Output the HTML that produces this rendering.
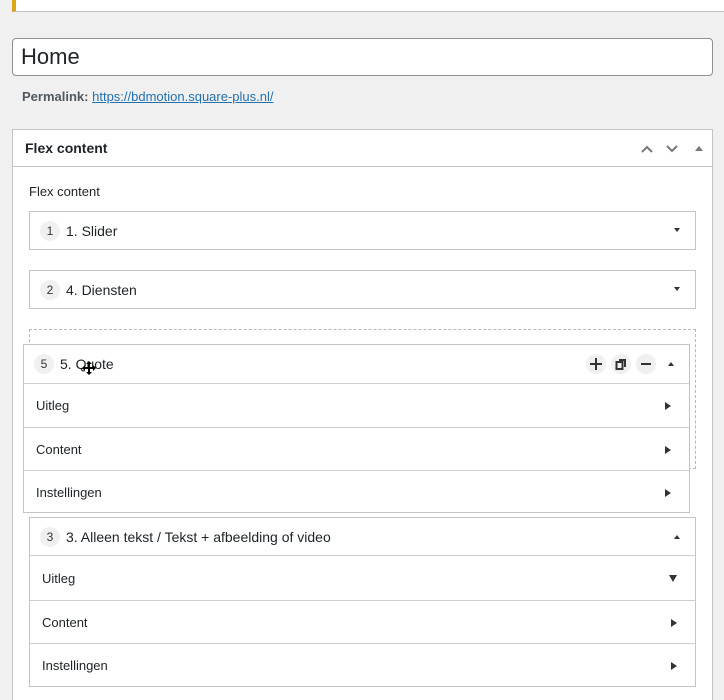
<!DOCTYPE html>
<html><head><meta charset="utf-8"><style>
*{box-sizing:border-box;margin:0;padding:0}
html{overflow:hidden;height:700px}
body{width:724px;height:700px;background:#f0f0f1;font-family:"Liberation Sans",sans-serif;color:#1d2327;position:relative;overflow:hidden}
.a{position:absolute}
.box{position:absolute;background:#fff;border:1px solid #c3c4c7}
.badge{position:absolute;width:20px;height:20px;border-radius:50%;background:#f0f0f1;font-size:12px;line-height:20px;text-align:center;color:#333}
.t{position:absolute;font-size:14px}
.row{position:absolute;left:0;right:0;border-top:1px solid #ccd0d4;font-size:13px;padding-left:12px}
.tri-d{position:absolute;width:0;height:0;border-left:3px solid transparent;border-right:3px solid transparent;border-top:4px solid #333}
.tri-u{position:absolute;width:0;height:0;border-left:3px solid transparent;border-right:3px solid transparent;border-bottom:4px solid #333}
.tri-r{position:absolute;width:0;height:0;border-top:4px solid transparent;border-bottom:4px solid transparent;border-left:6px solid #333}
.ic{position:absolute;width:20px;height:20px;border-radius:50%;background:#f0f0f1}
</style></head><body>
<div class="a" style="left:12px;top:-2px;width:712px;height:14px;background:#fff;border-bottom:1px solid #c3c4c7;border-left:4px solid #dba617"></div>
<div class="a" style="left:12px;top:38px;width:701px;height:38px;background:#fff;border:1px solid #8c8f94;border-radius:4px;font-size:22px;line-height:36px;padding-left:8px">Home</div>
<div class="a" style="left:22px;top:89px;font-size:13px;color:#50575e"><b>Permalink:</b> <span style="color:#2271b1;text-decoration:underline">https://bdmotion.square-plus.nl/</span></div>

<div class="box" style="left:12px;top:129px;width:701px;height:600px"></div>
<div class="a" style="left:13px;top:166px;width:699px;height:1px;background:#c3c4c7"></div>
<div class="a" style="left:25px;top:140px;font-size:14px;font-weight:bold">Flex content</div>
<svg class="a" style="left:638px;top:140px" width="70" height="16">
<path d="M4 12 L9 7 L14 12" fill="none" stroke="#777" stroke-width="2"/>
<path d="M29 6 L34 11 L39 6" fill="none" stroke="#777" stroke-width="2"/>
<path d="M57 11 L61 6 L65 11Z" fill="#777"/>
</svg>
<div class="a" style="left:29px;top:184px;font-size:13px">Flex content</div>

<div class="box" style="left:29px;top:211px;width:667px;height:39px">
<div class="badge" style="left:10px;top:9px">1</div><div class="t" style="left:36px;top:11px">1. Slider</div>
<div class="tri-d" style="left:644px;top:16px"></div></div>
<div class="box" style="left:29px;top:270px;width:667px;height:39px">
<div class="badge" style="left:10px;top:9px">2</div><div class="t" style="left:36px;top:11px">4. Diensten</div>
<div class="tri-d" style="left:644px;top:16px"></div></div>

<div class="a" style="left:29px;top:329px;width:667px;height:140px;border:1px dashed #b4b9be"></div>

<div class="box" style="left:23px;top:344px;width:667px;height:169px">
<div class="badge" style="left:10px;top:9px">5</div><div class="t" style="left:36px;top:11px">5. Quote</div>
<svg class="a" style="left:58px;top:16px" width="14" height="14"><path d="M7 1V13M1 7H13" stroke="#000" stroke-width="2"/><path d="M7 0L4 3H10Z M7 14L4 11H10Z M0 7L3 4V10Z M14 7L11 4V10Z" fill="#000"/></svg>
<div class="ic" style="left:562px;top:9px"></div><svg class="a" style="left:566px;top:13px" width="12" height="12"><path d="M6 0V12M0 6H12" stroke="#333" stroke-width="2"/></svg>
<div class="ic" style="left:587px;top:9px"></div><svg class="a" style="left:591px;top:13px" width="12" height="12"><rect x="1.5" y="4" width="6" height="7" fill="none" stroke="#333" stroke-width="2"/><path d="M4 2H10V9" fill="none" stroke="#333" stroke-width="2"/></svg>
<div class="ic" style="left:612px;top:9px"></div><div class="a" style="left:617px;top:18px;width:10px;height:2px;background:#333"></div>
<div class="tri-u" style="left:644px;top:17px"></div>
<div class="row" style="top:38px;height:44px;line-height:44px">Uitleg<div class="tri-r" style="left:641px;top:18px"></div></div>
<div class="row" style="top:82px;height:43px;line-height:43px">Content<div class="tri-r" style="left:641px;top:18px"></div></div>
<div class="row" style="top:125px;height:43px;line-height:43px">Instellingen<div class="tri-r" style="left:641px;top:18px"></div></div>
</div>

<div class="box" style="left:29px;top:517px;width:667px;height:170px">
<div class="badge" style="left:10px;top:9px">3</div><div class="t" style="left:36px;top:11px">3. Alleen tekst / Tekst + afbeelding of video</div>
<div class="tri-u" style="left:644px;top:17px"></div>
<div class="row" style="top:37px;height:45px;line-height:45px">Uitleg<div class="a" style="left:639px;top:19px;width:0;height:0;border-left:4px solid transparent;border-right:4px solid transparent;border-top:7px solid #333"></div></div>
<div class="row" style="top:82px;height:43px;line-height:43px">Content<div class="tri-r" style="left:641px;top:18px"></div></div>
<div class="row" style="top:125px;height:43px;line-height:43px">Instellingen<div class="tri-r" style="left:641px;top:18px"></div></div>
</div>
</body></html>
